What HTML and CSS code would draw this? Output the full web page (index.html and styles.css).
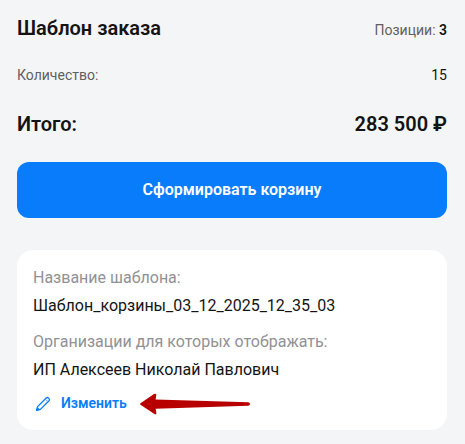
FILE: index.html
```html
<!DOCTYPE html>
<html lang="ru">
<head>
  <meta charset="UTF-8" />
  <meta name="viewport" content="width=device-width, initial-scale=1.0" />
  <title>Шаблон заказа</title>
  <link rel="stylesheet" href="styles.css">
</head>
<body>
  <main class="order">
    <header class="row order-header">
      <h1>Шаблон заказа</h1>
      <div class="positions">Позиции: <strong>3</strong></div>
    </header>
    <div class="row count">
      <span class="muted">Количество:</span>
      <span>15</span>
    </div>
    <div class="row total">
      <span>Итого:</span>
      <span>283 500 ₽</span>
    </div>
    <button class="submit" type="button">Сформировать корзину</button>

    <section class="card">
      <dl>
        <dt>Название шаблона:</dt>
        <dd>Шаблон_корзины_03_12_2025_12_35_03</dd>
        <dt>Организации для которых отображать:</dt>
        <dd>ИП Алексеев Николай Павлович</dd>
      </dl>
      <div class="actions">
        <a class="edit" href="#">
          <svg width="20" height="20" viewBox="0 0 20 20" fill="none" stroke="currentColor" stroke-linejoin="round" aria-hidden="true">
            <path d="M3.6 16.4 L4.6 12.6 L13.2 4 Q14.3 3 15.4 4 L16 4.6 Q17 5.7 16 6.8 L7.4 15.4 Z" stroke-width="1.3" />
            <path d="M13.1 5.8 L14.2 6.9" stroke-width="0.9" />
            <path d="M3 17 L4.2 12.8 L7.2 15.8 Z" fill="currentColor" stroke="none" />
          </svg>
          <span>Изменить</span>
        </a>
        <svg class="arrow" width="110" height="22" viewBox="0 0 110 22" aria-hidden="true">
          <path d="M0.5 10.2 L14 1 Q16.4 0 16.3 2 L15.6 6.4 L108 9.2 Q110 9.3 110 11 Q110 12.8 108 12.8 L15.6 15.8 L16.4 20 Q16.4 22 14.4 21.1 L0.5 11.8 Q-0.4 11 0.5 10.2 Z" fill="#b90000" />
        </svg>
      </div>
    </section>
  </main>
</body>
</html>
```
FILE: styles.css
```css
* { box-sizing: border-box; }
body {
  margin: 0;
  background: #f4f5f7;
  color: #141414;
  font-family: Roboto, "Liberation Sans", sans-serif;
  font-size: 16px;
  line-height: 24px;
}
.order {
  padding: 14px 18px 14px 17px;
}
.row {
  display: flex;
  justify-content: space-between;
  align-items: baseline;
}
h1, .total {
  margin: 0;
  font-size: 20px;
  font-weight: 600;
  line-height: 28px;
}
.positions, .count {
  font-size: 14px;
  line-height: 20px;
}
.positions, .muted {
  color: #5f6063;
}
.positions strong {
  color: #141414;
  font-weight: 600;
}
.count {
  margin-top: 23px;
}
.total {
  margin-top: 25px;
}
.submit {
  display: block;
  width: 100%;
  margin-top: 24px;
  padding: 16px;
  border: none;
  border-radius: 12px;
  background: #087cfa;
  color: #fff;
  font-family: inherit;
  font-size: 16px;
  font-weight: 600;
  line-height: 24px;
  cursor: pointer;
}
.card {
  margin-top: 32px;
  padding: 16px;
  border-radius: 16px;
  background: #fff;
}
dl {
  margin: 0;
}
dt {
  color: #919195;
}
dd {
  margin: 4px 0 12px;
}
.actions {
  display: flex;
  align-items: center;
  gap: 13px;
}
.arrow {
  margin: -1px 0;
}
.edit {
  display: flex;
  align-items: flex-start;
  gap: 8px;
  color: #087cfa;
  font-size: 14px;
  font-weight: 600;
  line-height: 18px;
  text-decoration: none;
}
```
